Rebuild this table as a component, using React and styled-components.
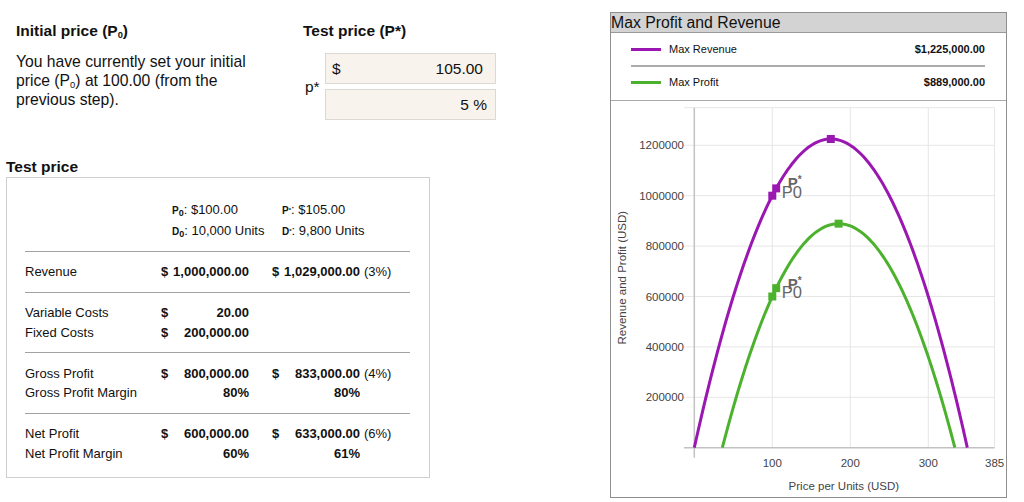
import React from "react";
import styled, { createGlobalStyle } from "styled-components";

const GlobalStyle = createGlobalStyle`
  body {
    margin: 0;
    background: #fff;
    color: #111;
    font-family: "Liberation Sans", Arial, Helvetica, sans-serif;
  }
`;

const Page = styled.div`
  display: flex;
  width: 1024px;
  height: 502px;
  overflow: hidden;
`;

const LeftPane = styled.div`
  width: 610px;
  box-sizing: border-box;
  padding: 22px 0 0 6px;
`;

const TopRow = styled.div`
  display: flex;
  padding-left: 10px;
`;

const InitialCol = styled.div`
  width: 287px;
`;

const Heading = styled.h3`
  margin: 0;
  font-size: 15.5px;
  line-height: 18px;
  font-weight: 700;
`;

const Sub = styled.sub`
  font-size: 0.6em;
  vertical-align: -0.25em;
  line-height: 0;
`;

const Para = styled.p`
  margin: 12px 0 0;
  font-size: 15.7px;
  line-height: 19.2px;
  width: 252px;
`;

const TestCol = styled.div`
  display: flex;
  flex-direction: column;
`;

const InputRow = styled.div`
  display: flex;
  align-items: center;
  margin-top: 13px;
`;

const PLabel = styled.span`
  width: 20px;
  padding-left: 2px;
  font-size: 15.5px;
`;

const InputStack = styled.div`
  display: flex;
  flex-direction: column;
  gap: 5px;
`;

const Field = styled.div`
  display: flex;
  align-items: center;
  justify-content: space-between;
  width: 171px;
  height: 31px;
  box-sizing: border-box;
  border: 1px solid #dcd8d4;
  background: #f9f3ee;
  font-size: 15.5px;
  padding: 0 ${(p) => p.$padRight}px 0 6px;
`;

const SectionTitle = styled(Heading)`
  margin-top: 38px;
  margin-bottom: 1px;
`;

const TableBox = styled.div`
  width: 424px;
  box-sizing: border-box;
  border: 1px solid #cfcfcf;
  padding: 0 19px 4px 18px;
  font-size: 13px;
`;

const HeaderBlock = styled.div`
  padding: 20.5px 0 10px;
`;

const HeaderGrid = styled.div`
  display: grid;
  grid-template-columns: 147px 110px auto;
  grid-auto-rows: 21px;
  line-height: 21px;
`;

const Tag = styled.b`
  font-size: 10px;
  font-weight: 700;
`;

const TagSub = styled.sub`
  font-size: 9px;
  vertical-align: -2px;
  line-height: 0;
`;

const TagSup = styled.sup`
  font-size: 6px;
  vertical-align: 2px;
  line-height: 0;
`;

const Divider = styled.hr`
  margin: 0;
  border: 0;
  border-top: 1px solid #a2a2a2;
`;

const Group = styled.div`
  padding: 10.5px 0 10px;
`;

const Row = styled.div`
  display: grid;
  grid-template-columns: 136px 111px 88px auto;
  line-height: 19.5px;
`;

const Amount = styled.span`
  display: flex;
  justify-content: space-between;
  width: 88px;
  font-weight: 700;
`;

const Pct = styled.span`
  width: 88px;
  text-align: right;
  font-weight: 700;
`;

const Change = styled.span`
  padding-left: 4px;
`;

const ChartPanel = styled.div`
  width: 397px;
  height: 486px;
  margin-top: 12px;
  box-sizing: border-box;
  border: 1px solid #8e8e8e;
  display: flex;
  flex-direction: column;
`;

const PanelTitle = styled.div`
  height: 19px;
  line-height: 20px;
  background: #d3d3d3;
  border-bottom: 1px solid #9a9a9a;
  font-size: 15.8px;
  color: #111;
  white-space: nowrap;
`;

const Legend = styled.div`
  padding: 5px 21px 7px 20px;
  border-bottom: 1px solid #aaa;
`;

const LegendRow = styled.div`
  display: flex;
  align-items: center;
  height: 22px;
  font-size: 11px;
`;

const Swatch = styled.span`
  width: 30px;
  height: 3px;
  background: ${(p) => p.$color};
  margin-right: 8px;
`;

const LegendValue = styled.b`
  margin-left: auto;
`;

const LegendSep = styled.div`
  height: 2px;
  background: #ababab;
  margin: 5px 0 4px;
`;

const PURPLE = "#9b17b1";
const GREEN = "#4cb22e";

const X = (p) => 83.3 + p * 0.78;
const Y = (v) => 346.7 - v * 0.000252;
const revenue = (p) => p * (14000 - 40 * p);
const profit = (p) => (p - 20) * (14000 - 40 * p) - 200000;

const buildPath = (fn, from, to) => {
  const pts = [];
  const steps = 120;
  for (let i = 0; i <= steps; i++) {
    const p = from + ((to - from) * i) / steps;
    pts.push(`${X(p).toFixed(2)},${Y(Math.max(0, fn(p))).toFixed(2)}`);
  }
  return "M" + pts.join(" L");
};

const Marker = ({ p, v, color }) => (
  <rect x={X(p) - 4} y={Y(v) - 4} width="8" height="8" fill={color} />
);

const PointLabels = ({ y0, yStar }) => (
  <g fontFamily="Liberation Sans, Arial, sans-serif" fill="#666">
    <text x="170.7" y={y0} fontSize="16.5">P0</text>
    <text x="176.7" y={yStar} fontSize="15" fontWeight="700">
      P<tspan fontSize="10" dy="-5">*</tspan>
    </text>
  </g>
);

const Chart = () => {
  const yTicks = [200000, 400000, 600000, 800000, 1000000, 1200000];
  const xTicks = [100, 200, 300, 385];
  const top = 6.7;
  const left = 73;
  const right = X(385);
  return (
    <svg width="395" height="395" viewBox="0 0 395 395" style={{ display: "block" }}>
      <g stroke="#e6e6e6" strokeWidth="1">
        <line x1={left} y1={top} x2={right} y2={top} />
        {yTicks.map((v) => (
          <line key={v} x1={left} y1={Y(v)} x2={right} y2={Y(v)} />
        ))}
        {xTicks.map((p) => (
          <line key={p} x1={X(p)} y1={top} x2={X(p)} y2={Y(0)} />
        ))}
      </g>
      <g stroke="#c2c2c2" strokeWidth="1.5">
        <line x1={left} y1={Y(0)} x2={right} y2={Y(0)} />
        <line x1={X(0)} y1={top} x2={X(0)} y2={Y(0) + 10} />
      </g>
      <g fontFamily="Liberation Sans, Arial, sans-serif" fontSize="11.5" fill="#444">
        {yTicks.map((v) => (
          <text key={v} x="73" y={Y(v) + 4} textAnchor="end">
            {v}
          </text>
        ))}
        {xTicks.map((p) => (
          <text key={p} x={X(p)} y="366" textAnchor="middle">
            {p}
          </text>
        ))}
        <text x="232.9" y="388.5" textAnchor="middle">
          Price per Units (USD)
        </text>
        <text x="14.8" y="176.7" textAnchor="middle" transform="rotate(-90 14.8 176.7)">
          Revenue and Profit (USD)
        </text>
      </g>
      <path d={buildPath(revenue, 0, 350)} fill="none" stroke={PURPLE} strokeWidth="3" />
      <path d={buildPath(profit, 35.92, 334.08)} fill="none" stroke={GREEN} strokeWidth="3" />
      <Marker p={100} v={1000000} color={PURPLE} />
      <Marker p={105} v={1029000} color={PURPLE} />
      <Marker p={175} v={1225000} color={PURPLE} />
      <Marker p={100} v={600000} color={GREEN} />
      <Marker p={105} v={633000} color={GREEN} />
      <Marker p={185} v={889000} color={GREEN} />
      <PointLabels y0={96.7} yStar={87.3} />
      <PointLabels y0={196.7} yStar={187.6} />
    </svg>
  );
};

const MoneyRow = ({ label, a, b, change }) => (
  <Row>
    <span>{label}</span>
    {a ? (
      <Amount>
        <span>$</span>
        <span>{a}</span>
      </Amount>
    ) : (
      <span />
    )}
    {b ? (
      <Amount>
        <span>$</span>
        <span>{b}</span>
      </Amount>
    ) : (
      <span />
    )}
    {change ? <Change>{change}</Change> : <span />}
  </Row>
);

const PctRow = ({ label, a, b }) => (
  <Row>
    <span>{label}</span>
    <Pct>{a}</Pct>
    <Pct>{b}</Pct>
    <span />
  </Row>
);

export default function App() {
  return (
    <>
      <GlobalStyle />
      <Page>
        <LeftPane>
          <TopRow>
            <InitialCol>
              <Heading>
                Initial price (P<Sub>0</Sub>)
              </Heading>
              <Para>
                You have currently set your initial price (P<Sub>0</Sub>) at 100.00 (from the previous step).
              </Para>
            </InitialCol>
            <TestCol>
              <Heading>Test price (P*)</Heading>
              <InputRow>
                <PLabel>p*</PLabel>
                <InputStack>
                  <Field $padRight={12}>
                    <span>$</span>
                    <span>105.00</span>
                  </Field>
                  <Field $padRight={8}>
                    <span />
                    <span>5 %</span>
                  </Field>
                </InputStack>
              </InputRow>
            </TestCol>
          </TopRow>

          <SectionTitle>Test price</SectionTitle>
          <TableBox>
            <HeaderBlock>
              <HeaderGrid>
                <span />
                <span>
                  <Tag>
                    P<TagSub>0</TagSub>
                  </Tag>
                  : $100.00
                </span>
                <span>
                  <Tag>
                    P<TagSup>*</TagSup>
                  </Tag>
                  : $105.00
                </span>
                <span />
                <span>
                  <Tag>
                    D<TagSub>0</TagSub>
                  </Tag>
                  : 10,000 Units
                </span>
                <span>
                  <Tag>
                    D<TagSup>*</TagSup>
                  </Tag>
                  : 9,800 Units
                </span>
              </HeaderGrid>
            </HeaderBlock>
            <Divider />
            <Group>
              <MoneyRow label="Revenue" a="1,000,000.00" b="1,029,000.00" change="(3%)" />
            </Group>
            <Divider />
            <Group>
              <MoneyRow label="Variable Costs" a="20.00" />
              <MoneyRow label="Fixed Costs" a="200,000.00" />
            </Group>
            <Divider />
            <Group>
              <MoneyRow label="Gross Profit" a="800,000.00" b="833,000.00" change="(4%)" />
              <PctRow label="Gross Profit Margin" a="80%" b="80%" />
            </Group>
            <Divider />
            <Group>
              <MoneyRow label="Net Profit" a="600,000.00" b="633,000.00" change="(6%)" />
              <PctRow label="Net Profit Margin" a="60%" b="61%" />
            </Group>
          </TableBox>
        </LeftPane>

        <ChartPanel>
          <PanelTitle>Max Profit and Revenue</PanelTitle>
          <Legend>
            <LegendRow>
              <Swatch $color={PURPLE} />
              <span>Max Revenue</span>
              <LegendValue>$1,225,000.00</LegendValue>
            </LegendRow>
            <LegendSep />
            <LegendRow>
              <Swatch $color={GREEN} />
              <span>Max Profit</span>
              <LegendValue>$889,000.00</LegendValue>
            </LegendRow>
          </Legend>
          <Chart />
        </ChartPanel>
      </Page>
    </>
  );
}
